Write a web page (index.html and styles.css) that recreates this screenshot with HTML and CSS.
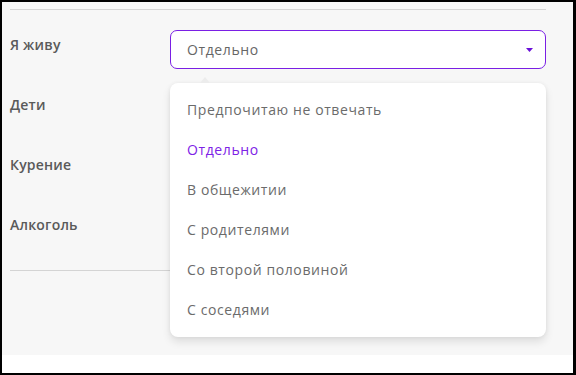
FILE: index.html
```html
<!DOCTYPE html>
<html lang="ru">
  <head>
    <meta charset="UTF-8" />
    <title>Анкета</title>
    <link rel="stylesheet" href="styles.css">
  </head>
  <body>
    <div class="frame">
      <div class="panel">
        <hr class="line" />

        <div class="form">
          <div class="form-row">
            <label>Я живу</label>
            <div class="select-wrap">
              <div class="select">
                <span>Отдельно</span>
                <svg class="caret" width="7" height="4" viewBox="0 0 7 4"><path d="M0 0h7L3.5 4z" fill="#6a10d8"/></svg>
              </div>
              <ul class="dropdown">
                <li>Предпочитаю не отвечать</li>
                <li class="active">Отдельно</li>
                <li>В общежитии</li>
                <li>С родителями</li>
                <li>Со второй половиной</li>
                <li>С соседями</li>
              </ul>
            </div>
          </div>
          <div class="form-row">
            <label>Дети</label>
          </div>
          <div class="form-row">
            <label>Курение</label>
          </div>
          <div class="form-row">
            <label>Алкоголь</label>
          </div>
        </div>

        <hr class="line" />
      </div>
    </div>
  </body>
</html>
```

FILE: styles.css
```css
body {
  margin: 0;
  background-color: #000;
  font-family: "Open Sans", "Noto Sans", sans-serif;
}

.frame {
  margin: 2px 3px 0 2px;
  height: 371px;
  background-color: #fff;
}

.panel {
  background-color: #f7f7f7;
  height: 353px;
  padding: 7px 27px 0 8px;
  box-sizing: border-box;
}

.line {
  border: none;
  border-top: 1px solid #d4d4d4;
  margin: 0;
}

.form {
  padding-top: 10px;
  margin-bottom: 10px;
}

.form-row {
  display: flex;
  align-items: flex-start;
  height: 60px;
}

.form-row label {
  width: 160px;
  padding-top: 15px;
  line-height: 20px;
  font-size: 14px;
  font-weight: 600;
  letter-spacing: 0.2px;
  color: #5a5a5a;
}

.select-wrap {
  position: relative;
  width: 376px;
  margin-top: 10px;
}

.select {
  display: flex;
  align-items: center;
  justify-content: space-between;
  height: 39px;
  box-sizing: border-box;
  padding: 0 12px 0 16px;
  border: 1px solid #7a1fe4;
  border-radius: 7px;
  background-color: #fff;
  font-size: 14px;
  letter-spacing: 0.6px;
  color: #666;
}

.dropdown {
  position: absolute;
  top: 53px;
  left: 0;
  right: 0;
  z-index: 2;
  list-style: none;
  margin: 0;
  padding: 7px 0;
  background-color: #fff;
  border-radius: 8px;
  box-shadow: 0 5px 8px rgba(0, 0, 0, 0.1), 0 0 4px rgba(0, 0, 0, 0.06);
}

.dropdown::before {
  content: "";
  position: absolute;
  top: -6px;
  left: 30px;
  border-left: 5px solid transparent;
  border-right: 5px solid transparent;
  border-bottom: 6px solid #ececec;
}

.dropdown li {
  height: 40px;
  line-height: 40px;
  padding-left: 17px;
  font-size: 14px;
  letter-spacing: 0.6px;
  color: #6b6b6b;
}

.dropdown li.active {
  color: #7d22e6;
}
```
